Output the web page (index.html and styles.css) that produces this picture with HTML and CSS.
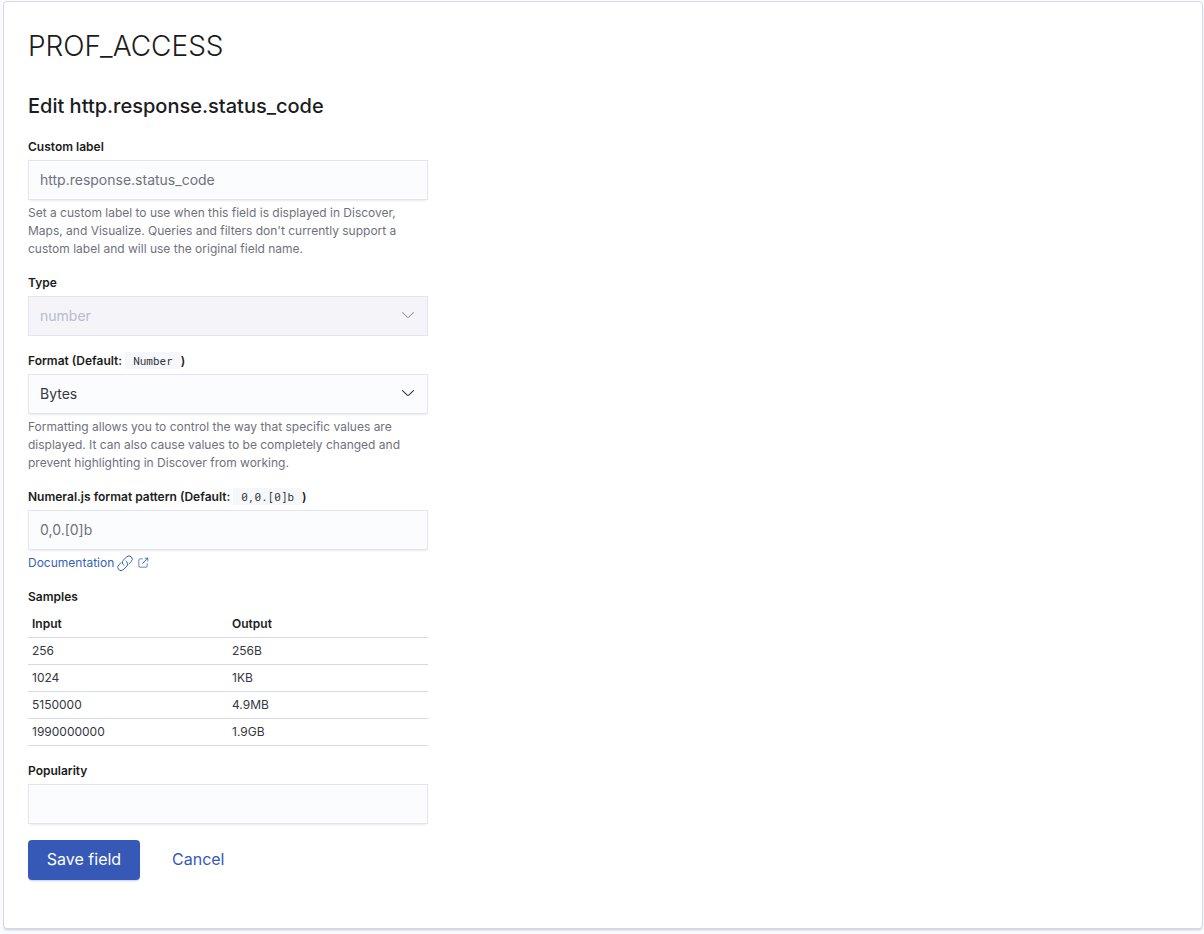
FILE: index.html
```html
<!DOCTYPE html>
<html lang="en">
<head>
<meta charset="utf-8">
<title>PROF_ACCESS</title>
<link rel="stylesheet" href="styles.css">
</head>
<body>
<main class="panel">
  <h1 class="page-title">PROF_ACCESS</h1>
  <h2 class="section-title">Edit http.response.status_code</h2>
  <form class="form">
    <div class="row">
      <label class="label" for="custom-label">Custom label</label>
      <input class="field text-field" id="custom-label" type="text" placeholder="http.response.status_code" aria-describedby="custom-help">
      <p class="help" id="custom-help">Set a custom label to use when this field is displayed in Discover, Maps, and Visualize. Queries and filters don't currently support a custom label and will use the original field name.</p>
    </div>
    <div class="row">
      <label class="label" for="type">Type</label>
      <div class="select">
        <select class="field" id="type" disabled><option>number</option></select>
        <svg class="chevron chevron-disabled" viewBox="0 0 16 16" aria-hidden="true"><path d="M13.069 5.157L8.384 9.768a.546.546 0 01-.768 0L2.93 5.158a.552.552 0 00-.771 0 .53.53 0 000 .759l4.684 4.61c.641.631 1.672.63 2.312 0l4.684-4.61a.53.53 0 000-.76.552.552 0 00-.771 0z"/></svg>
      </div>
    </div>
    <div class="row">
      <label class="label" for="format">Format (Default: <code class="code">Number</code>)</label>
      <div class="select">
        <select class="field" id="format" aria-describedby="format-help"><option>Bytes</option></select>
        <svg class="chevron" viewBox="0 0 16 16" aria-hidden="true"><path d="M13.069 5.157L8.384 9.768a.546.546 0 01-.768 0L2.93 5.158a.552.552 0 00-.771 0 .53.53 0 000 .759l4.684 4.61c.641.631 1.672.63 2.312 0l4.684-4.61a.53.53 0 000-.76.552.552 0 00-.771 0z"/></svg>
      </div>
      <p class="help" id="format-help">Formatting allows you to control the way that specific values are displayed. It can also cause values to be completely changed and prevent highlighting in Discover from working.</p>
    </div>
    <div class="row">
      <label class="label" for="pattern">Numeral.js format pattern (Default: <code class="code">0,0.[0]b</code>)</label>
      <input class="field text-field" id="pattern" type="text" placeholder="0,0.[0]b">
      <div class="help">
        <a class="link" href="#documentation"><span class="link-text">Documentation
          <svg class="link-icon" viewBox="0 0 16 16" aria-hidden="true"><g fill="none" stroke="currentColor" stroke-linecap="round"><path d="M7 10.300a3.300 3.300 0 0 1-.9-5L9.700 1.900a3.200 3.200 0 0 1 4.600 4.600L12 8.800"/><path d="M9 6.200a3.300 3.300 0 0 1 .9 5L6.300 14.600a3.200 3.200 0 0 1-4.600-4.600L4 7.700"/></g></svg></span>
          <svg class="popout-icon" viewBox="0 0 16 16" aria-label="External link"><path d="M13 8.5a.5.5 0 111 0V12a2 2 0 01-2 2H4a2 2 0 01-2-2V4a2 2 0 012-2h3.5a.5.5 0 010 1H4a1 1 0 00-1 1v8a1 1 0 001 1h8a1 1 0 001-1V8.5zm-5.12.339a.5.5 0 11-.706-.707L13.305 2H10.5a.5.5 0 110-1H14a1 1 0 011 1v3.5a.5.5 0 11-1 0V2.72L7.88 8.838z"/></svg>
        </a>
      </div>
    </div>
    <div class="row">
      <div class="label" id="samples">Samples</div>
      <table class="table" aria-labelledby="samples">
        <thead><tr><th scope="col">Input</th><th scope="col">Output</th></tr></thead>
        <tbody>
          <tr><td>256</td><td>256B</td></tr>
          <tr><td>1024</td><td>1KB</td></tr>
          <tr><td>5150000</td><td>4.9MB</td></tr>
          <tr><td>1990000000</td><td>1.9GB</td></tr>
        </tbody>
      </table>
    </div>
    <div class="row">
      <label class="label" for="popularity">Popularity</label>
      <input class="field text-field" id="popularity" type="text">
    </div>
    <div class="actions">
      <button class="button button-primary" type="submit">Save field</button>
      <button class="button button-empty" type="button">Cancel</button>
    </div>
  </form>
</main>
</body>
</html>
```
FILE: styles.css
```css
* {
  box-sizing: border-box;
}

body {
  margin: 0;
  padding: 1px 1px 4px 3px;
  background: #fafbfd;
  color: #343741;
  font-family: Inter, "Liberation Sans", sans-serif;
  font-size: 14px;
  line-height: 20px;
}

.panel {
  padding: 24px 24px 48px;
  border: 1px solid #d3dae6;
  border-radius: 4px;
  background: #fff;
  box-shadow: 0 2px 2px -1px rgba(70, 80, 140, 0.3);
}

.page-title {
  margin: 0;
  color: #1a1c21;
  font-size: 28px;
  font-weight: 300;
  line-height: 40px;
}

.section-title {
  margin: 24px 0 16px;
  color: #1a1c21;
  font-size: 20px;
  font-weight: 500;
  line-height: 32px;
}

.form {
  display: flex;
  flex-direction: column;
  gap: 16px;
  max-width: 400px;
}

.row {
  display: flex;
  flex-direction: column;
}

.label {
  margin-bottom: 4px;
  color: #1a1c21;
  font-size: 12px;
  font-weight: 600;
  line-height: 18px;
}

.code {
  display: inline-block;
  padding: 0 8px;
  background: #f5f7fa;
  color: #343741;
  font-family: "Roboto Mono", "DejaVu Sans Mono", monospace;
  font-size: 11px;
  font-weight: 400;
  line-height: 17px;
}

.field {
  width: 100%;
  height: 40px;
  padding: 0 11px;
  border: 1px solid #e3e4ef;
  border-radius: 0;
  background: #fbfcfd;
  box-shadow: 0 1px 1px -1px rgba(152, 162, 179, 0.2), 0 3px 2px -2px rgba(152, 162, 179, 0.2);
  color: #343741;
  font: inherit;
  appearance: none;
}

.text-field {
  padding-bottom: 2px;
}

.field::placeholder {
  color: #6f717d;
  opacity: 1;
}

.field:disabled {
  background: #f4f4f9;
  box-shadow: none;
  color: #b9bccb;
  opacity: 1;
}

.select {
  display: grid;
  align-items: center;
}

.select > * {
  grid-area: 1 / 1;
}

.chevron {
  width: 16px;
  height: 16px;
  margin: 0 12px 2px 0;
  justify-self: end;
  fill: #343741;
  pointer-events: none;
}

.chevron-disabled {
  fill: #98a2b3;
}

.help {
  margin: 0;
  padding-top: 4px;
  color: #6f717d;
  font-size: 12px;
  line-height: 18px;
}

.link {
  display: inline-flex;
  align-items: center;
  gap: 4px;
  color: #3463b8;
  text-decoration: none;
}

.link-text {
  display: inline-flex;
  align-items: center;
  gap: 3px;
}

.link-icon {
  width: 16px;
  height: 16px;
}

.popout-icon {
  width: 12px;
  height: 12px;
  fill: currentColor;
}

.table {
  width: 100%;
  border-top: 1px solid transparent;
  border-collapse: separate;
  border-spacing: 0;
  table-layout: fixed;
  font-size: 12px;
  line-height: 18px;
}

.table th,
.table td {
  padding: 4px;
  border-bottom: 1px solid #d5d8e8;
  text-align: left;
}

.table th {
  color: #1a1c21;
  font-weight: 600;
}

.actions {
  display: flex;
  gap: 16px;
}

.button {
  height: 40px;
  border: 0;
  border-radius: 4px;
  font: inherit;
  font-size: 16px;
}

.button-primary {
  min-width: 112px;
  padding: 0 12px 2px;
  background: #3659b8;
  box-shadow: 0 2px 2px -1px rgba(54, 89, 184, 0.3);
  color: #fff;
}

.button-empty {
  padding: 0 16px 2px;
  background: transparent;
  color: #3659b8;
}
```
